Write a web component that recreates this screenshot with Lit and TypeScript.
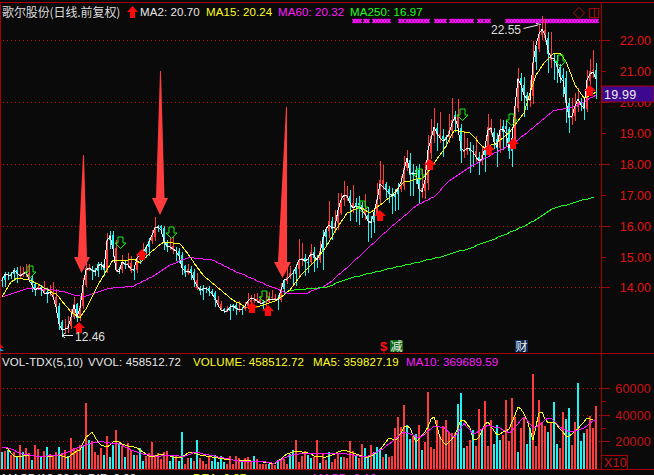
import { LitElement, html, css, svg } from "lit";
import { customElement } from "lit/decorators.js";

type Pt = [number, number];
const lerp = (pts: Pt[], x: number) => {
  if (x <= pts[0][0]) return pts[0][1];
  for (let i = 1; i < pts.length; i++) {
    if (x <= pts[i][0]) {
      const [a, b] = pts[i - 1], [c, d] = pts[i];
      return b + ((d - b) * (x - a)) / (c - a);
    }
  }
  return pts[pts.length - 1][1];
};
const rng = (seed: number) => () => {
  seed = (seed + 0x6d2b79f5) | 0;
  let t = Math.imul(seed ^ (seed >>> 15), 1 | seed);
  t = (t + Math.imul(t ^ (t >>> 7), 61 | t)) ^ t;
  return ((t ^ (t >>> 14)) >>> 0) / 4294967296;
};
const poly = (pts: Pt[]) => pts.map((p) => p.join(",")).join(" ");

const CLOSE: Pt[] = [[2,280],[6,272],[10,277],[14,270],[20,276],[26,272],[30,282],[35,290],[40,286],[45,295],[50,292],[55,300],[58,322],[62,330],[66,328],[70,327],[73,298],[76,318],[79,315],[85,270],[90,268],[95,272],[100,262],[104,268],[108,232],[112,240],[115,268],[118,275],[122,262],[128,265],[133,272],[137,258],[145,250],[150,240],[155,228],[160,226],[165,245],[172,248],[178,252],[183,272],[190,270],[196,285],[200,290],[206,288],[214,296],[220,310],[226,312],[232,305],[238,310],[244,308],[250,298],[256,300],[262,304],[270,298],[278,300],[284,280],[288,278],[294,272],[300,258],[306,262],[312,252],[318,262],[325,230],[330,224],[334,232],[338,210],[342,197],[346,193],[352,208],[358,205],[364,212],[370,226],[376,205],[380,184],[386,190],[393,197],[400,186],[407,158],[411,178],[415,168],[420,194],[424,190],[428,150],[434,127],[440,138],[444,142],[450,132],[454,113],[458,128],[462,154],[466,148],[472,150],[480,163],[484,155],[487,130],[491,128],[496,152],[500,130],[505,128],[509,148],[513,135],[517,77],[521,85],[525,98],[530,100],[534,50],[538,40],[540,27],[544,30],[548,50],[552,60],[556,58],[559,78],[562,75],[566,100],[570,122],[574,110],[577,97],[581,105],[584,108],[587,80],[592,70],[596,79]];
const MA15: Pt[] = [[2,297],[10,283],[17,278],[30,280],[43,287],[57,295],[72,313],[80,318],[87,307],[97,287],[113,260],[127,260],[133,258],[140,263],[150,253],[163,242],[180,243],[190,257],[203,275],[217,287],[233,300],[247,308],[263,305],[277,300],[290,290],[303,273],[313,263],[327,246],[334,233],[347,213],[360,207],[370,213],[390,197],[404,182],[424,177],[444,150],[454,130],[470,133],[484,148],[497,143],[510,132],[524,113],[527,103],[535,77],[544,63],[554,53],[560,53],[567,63],[574,83],[584,98],[596,92]];
const MA60: Pt[] = [[2,297],[13,293],[30,288],[57,290],[83,297],[110,288],[133,286],[150,278],[170,265],[190,257],[213,260],[237,272],[267,285],[287,293],[307,293],[327,285],[350,265],[379,238],[397,222],[417,205],[434,197],[450,180],[470,167],[494,153],[514,143],[534,127],[554,110],[574,107],[596,95]];
const MA250: Pt[] = [[288,290],[327,287],[350,278],[400,266],[440,257],[470,248],[492,240],[527,225],[554,208],[577,202],[596,196]];
const VMA5: Pt[] = [[2,447],[7,447],[12,455],[17,457],[25,455],[40,456],[50,456],[60,455],[68,458],[75,452],[80,450],[85,438],[92,432],[100,445],[108,447],[115,440],[125,445],[135,447],[150,457],[160,454],[170,456],[180,458],[190,452],[200,455],[215,457],[225,459],[240,460],[260,461],[275,464],[285,455],[295,451],[305,452],[315,456],[327,457],[344,450],[367,458],[380,450],[389,438],[397,440],[405,425],[410,428],[416,442],[427,430],[433,414],[440,437],[445,446],[454,437],[462,417],[470,428],[474,442],[479,437],[487,420],[497,435],[509,429],[519,405],[527,420],[533,440],[540,408],[547,423],[554,422],[567,437],[577,430],[587,418],[594,420]];
const VMA10: Pt[] = [[2,447],[10,448],[20,453],[35,456],[60,455],[85,445],[100,441],[120,444],[135,452],[155,456],[170,455],[185,456],[195,452],[215,456],[240,461],[260,461],[275,463],[290,455],[305,453],[327,453],[344,453],[367,457],[384,448],[404,432],[420,438],[434,426],[444,427],[454,438],[464,423],[474,435],[487,425],[500,428],[510,433],[524,417],[534,428],[550,417],[560,427],[570,432],[584,428],[594,420]];

const SPIKES: Pt[] = [[85,403],[72,438],[115,430],[106,436],[182,432],[153,442],[198,440],[295,440],[317,440],[429,392],[461,393],[534,374],[579,383],[595,406],[555,402],[538,400],[512,398],[485,401],[457,404],[404,405],[478,409],[525,418],[505,400],[562,412],[570,408],[436,420],[408,425],[418,425],[399,417],[446,420]];
const CYAN_SPIKES = [461, 579, 555, 457, 182, 198, 408, 570];

const sample = (pts: Pt[], from = 2, to = 596) => {
  const out: Pt[] = [];
  for (let x = from; x <= to; x += 3) out.push([x, Math.round(lerp(pts, x))]);
  return out;
};

const UP: Pt[] = [[79,322],[142,249],[252,302],[268,305],[380,210],[430,159],[489,144],[513,138],[590,85]];
const DOWN: Pt[] = [[30,277],[120,248],[171,238],[264,302],[362,212],[419,180],[462,120],[511,125],[560,66]];
const MARK_RUNS: Pt[] = [[354,362],[365,370],[374,390],[400,404],[407,430],[436,447],[451,473],[479,483],[486,491],[507,598]];
const GRID = [40, 102, 164, 226, 287];
const TICKS: [number, string][] = [[40,"22.00"],[71,"21.00"],[102,"20.00"],[133,"19.00"],[164,"18.00"],[195,"17.00"],[226,"16.00"],[257,"15.00"],[287,"14.00"]];
const VTICKS: [number, string][] = [[388,"60000"],[415,"40000"],[441,"20000"]];

function buildBars() {
  const r = rng(11);
  const wick = (x: number) => (x < 290 ? 3 + r() * 7 : 7 + r() * 15);
  const candles: { x: number; top: number; bot: number; a: number; b: number; up: boolean }[] = [];
  const vols: { x: number; y: number; up: boolean }[] = [];
  let prev = lerp(CLOSE, 2);
  for (let x = 2; x <= 596; x += 3) {
    const c = lerp(CLOSE, x) + (r() - 0.5) * (x < 290 ? 4 : 8);
    const up = r() < 0.18 ? c >= prev : c < prev;
    const a = Math.min(c, prev), b = Math.max(c, prev);
    const w = wick(x);
    candles.push({ x, top: Math.round(a - w * (up ? 1 : 0.35)), bot: Math.round(b + w * (up ? 0.35 : 1)), a: Math.round(a), b: Math.round(b), up });
    prev = c;
    const env = x < 70 ? 22 : x < 130 ? 26 : x < 180 ? 20 : x < 260 ? 13 : x < 290 ? 10 : x < 345 ? 18 : x < 395 ? 26 : x < 460 ? 40 : 48;
    let y = 469 - env * (0.35 + r() * 0.75);
    const sp = SPIKES.find((s) => Math.abs(s[0] - x) <= 1);
    if (sp) y = sp[1];
    const volUp = sp ? !CYAN_SPIKES.some((k) => Math.abs(k - x) <= 1) : r() < 0.55;
    vols.push({ x, y: Math.round(y), up: volUp });
  }
  return { candles, vols };
}
const { candles, vols } = buildBars();

@customElement("app-root")
export class AppRoot extends LitElement {
  static styles = css`
    :host { display: block; width: 654px; height: 475px; background: #0a0a0a; overflow: hidden;
      font-family: "Liberation Sans", Arial, "Noto Sans CJK SC", sans-serif; }
    .board { display: grid; grid-template-rows: 352px 118px 5px; height: 475px; }
    .panel { position: relative; }
    svg { display: block; overflow: visible; }
    .legend { position: absolute; left: 2px; display: flex; align-items: center; white-space: nowrap;
      font-size: 11.5px; letter-spacing: 0.1px; line-height: 14px; }
    .price .legend { top: 5px; }
    .vol .legend { top: 3px; }
    .title { font-family: "Noto Sans CJK SC", "Liberation Sans", sans-serif; font-size: 12px; color: #dcdcdc; width: 125px; letter-spacing: -0.1px; }
    .uparrow { width: 11px; height: 12px; margin-right: 2px; }
    .w { color: #e8e8e8; } .y { color: #ffff1e; } .m { color: #ff1eff; } .g { color: #1eff1e; }
    .c66 { width: 66px; } .c72 { width: 72px; } .c86 { width: 86px; } .c105 { width: 105px; } .c120 { width: 120px; } .c93 { width: 93px; }
    .foot { overflow: hidden; position: relative; }
    .foot .legend { top: 1px; }
    .ax { font-size: 12.5px; fill: #e01414; }
    .ax-v { font-size: 12.5px; fill: #c81212; letter-spacing: 0.2px; }
    .tag { font-size: 12.5px; fill: #ececec; letter-spacing: 0.2px; }
    .note { font-size: 12px; fill: #dedede; }
    .cjk { font-family: "Noto Sans CJK SC", sans-serif; font-size: 12px; fill: #ececec; }
    .sign { font-size: 13px; font-weight: bold; fill: #ff1010; }
    .frame { stroke: #a80000; stroke-width: 1; fill: none; shape-rendering: crispEdges; }
    .grid { stroke: #c01010; stroke-width: 1; stroke-dasharray: 1 3; shape-rendering: crispEdges; }
    .line { fill: none; stroke-width: 1; shape-rendering: crispEdges; }
    .mark { stroke: #ff10ff; stroke-width: 1.5; fill: none; }
    .dn { fill: none; stroke: #10f010; stroke-width: 1; }
    .white { stroke: #eeeeee; fill: none; }
    .diamond { stroke: #a01010; fill: none; }
    .red { fill: #ff3c3c; } .cyan { fill: #22f2f2; } .solid { fill: #ff0a0a; }
    .tagbox { fill: #3c0890; stroke: #a80000; }
    .gbox { fill: #0a6a10; } .bbox { fill: #0c2c5c; }
    .mini-r { fill: #e01010; } .mini-b { fill: #2090e0; }
    .s-m { stroke: #ff10ff; } .s-g { stroke: #18ff18; } .s-y { stroke: #ffff10; } .s-w { stroke: #ffffff; }
  `;

  private candles() {
    return candles.map((c) => {
      const col = c.up ? "red" : "cyan";
      return svg`<rect class=${col} x=${c.x} y=${c.top} width="1" height=${c.bot - c.top}/>
        <rect class=${col} x=${c.x - 1} y=${c.a} width="2" height=${Math.max(1, c.b - c.a)}/>`;
    });
  }
  private price() {
    const marks: unknown[] = [];
    for (const [a, b] of MARK_RUNS)
      for (let x = a; x <= b; x += 3)
        marks.push(svg`<path class="mark" d="M${x - 1.5} 19 L${x + 1.5} 23 M${x + 1.5} 19 L${x - 1.5} 23"/>`);
    return svg`<svg width="654" height="352" viewBox="0 0 654 352">
      <path class="frame" d="M0 2.5H654 M0.5 2V352 M601.5 2V352"/>
      ${GRID.map((y) => svg`<line class="grid" x1="3" x2="601" y1=${y + 0.5} y2=${y + 0.5}/>`)}
      ${TICKS.map(([y, t], i) => svg`<line class="frame" x1="601" x2=${i % 2 ? 606 : 610} y1=${y + 0.5} y2=${y + 0.5}/>
        <text class="ax" x="651" y=${y + 5} text-anchor="end">${t}</text>`)}
      ${marks}
      ${this.candles()}
      <polyline class="line s-m" points=${poly(sample(MA60))}/>
      <polyline class="line s-g" points=${poly(sample(MA250, 288))}/>
      <polyline class="line s-y" points=${poly(sample(MA15))}/>
      <polyline class="line s-w" points=${poly(sample(CLOSE))}/>
      ${UP.map(([x, y]) => svg`<path class="solid" d="M${x} ${y}l6 6h-3v5h-6v-5h-3z"/>`)}
      ${DOWN.map(([x, y]) => svg`<path class="dn" d="M${x + 0.5} ${y + 0.5}l-5.5 -5.5h3v-6h5v6h3z"/>`)}
      <polygon class="red" points="83,155 84,155 87,257 90,257 81.5,273 74,257 78,257"/>
      <polygon class="red" points="160,71 161,71 164.5,198 168,198 160,215 152,198 156,198"/>
      <polygon class="red" points="286,107 287,107 287,262 291,262 282.5,278 274,262 278,262"/>
      <text class="note" x="491" y="34">22.55</text>
      <path class="white" d="M523.5 28.5L538 25M536 23.5L541 24.5"/>
      <text class="note" x="75" y="340.5">12.46</text>
      <path class="white" d="M62 335.5H73M65 333L62 335.5L65 338"/>
      <path class="diamond" d="M579 7.5L584.5 13L579 18.5L573.5 13Z"/>
      <path class="frame" d="M589.5 8.5H598.5V17.5H589.5ZM594.5 8.5V17.5"/>
      <rect class="tagbox" x="602" y="86" width="52" height="16"/>
      <text class="tag" x="604" y="99">19.99</text>
      <path class="mini-r" d="M0 344l4 4h-4z"/><path class="mini-b" d="M0 348l4 3h-4z"/>
      <text class="sign" x="380" y="351">$</text>
      <rect class="gbox" x="390" y="340" width="13" height="12"/>
      <text class="cjk" x="390.5" y="350.5">减</text>
      <rect class="bbox" x="515" y="340" width="13" height="12"/>
      <text class="cjk" x="515.5" y="350.5">财</text>
    </svg>`;
  }
  private volume() {
    return svg`<svg width="654" height="118" viewBox="0 352 654 118">
      <path class="frame" d="M0 353.5H654 M0.5 352V470 M601.5 352V470 M0 469.5H654"/>
      ${[388, 415, 441].map((y) => svg`<line class="grid" x1="3" x2="601" y1=${y + 0.5} y2=${y + 0.5}/>`)}
      ${VTICKS.map(([y, t]) => svg`<line class="frame" x1="601" x2="610" y1=${y + 0.5} y2=${y + 0.5}/>
        <text class="ax-v" x="651" y=${y + 5} text-anchor="end">${t}</text>`)}
      ${[401, 428].map((y) => svg`<line class="frame" x1="601" x2="606" y1=${y + 0.5} y2=${y + 0.5}/>`)}
      ${vols.map((v) => svg`<rect class=${v.up ? "red" : "cyan"} x=${v.x - 1} y=${v.y} width="2" height=${469 - v.y}/>`)}
      <polyline class="line s-y" points=${poly(sample(VMA5))}/>
      <polyline class="line s-m" points=${poly(sample(VMA10))}/>
      <path class="frame" d="M601.5 455.5H627.5V469.5"/>
      <text class="ax-v" x="604" y="467">X10</text>
    </svg>`;
  }

  render() {
    return html`<div class="board">
      <div class="panel price">
        ${this.price()}
        <div class="legend">
          <span class="title">歌尔股份(日线.前复权)</span>
          <svg class="uparrow" viewBox="0 0 11 12"><path class="solid" d="M5.5 0l5.5 6h-3v6h-5v-6h-3z"/></svg>
          <span class="w c66">MA2: 20.70</span><span class="y c72">MA15: 20.24</span><span class="m c72">MA60: 20.32</span><span class="g">MA250: 16.97</span>
        </div>
      </div>
      <div class="panel vol">
        ${this.volume()}
        <div class="legend">
          <span class="w c86">VOL-TDX(5,10)</span><span class="w c105">VVOL: 458512.72</span><span class="y c120">VOLUME: 458512.72</span><span class="y c93">MA5: 359827.19</span><span class="m">MA10: 369689.59</span>
        </div>
      </div>
      <div class="foot"><div class="legend">
        <span class="w c86">MACD(12,26,9)</span><span class="w c105">DIF: 0.92</span><span class="y c120">DEA: 0.87</span><span class="m">MACD: 0.10</span>
      </div></div>
    </div>`;
  }
}
